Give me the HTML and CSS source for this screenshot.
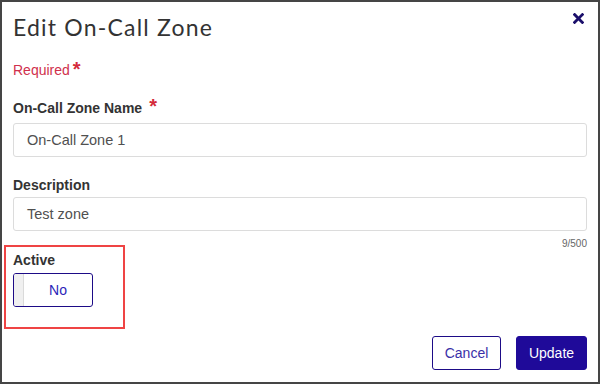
FILE: index.html
```html
<!DOCTYPE html>
<html>
<head>
<meta charset="utf-8">
<link rel="stylesheet" href="styles.css">
</head>
<body>
<div class="dialog">
  <div class="header">
    <h1 class="title">Edit On-Call Zone</h1>
    <button class="close" aria-label="Close">
      <svg width="11" height="11" viewBox="0 0 11 11"><path d="M1.6 1.6 L9.4 9.4 M9.4 1.6 L1.6 9.4" stroke="#1b0f6b" stroke-width="2.8" stroke-linecap="square"/></svg>
    </button>
  </div>
  <div class="required">Required<span class="star star-req">*</span></div>
  <div class="field field-name">
    <label class="label">On-Call Zone Name<span class="star star-label">*</span></label>
    <div class="input">On-Call Zone 1</div>
  </div>
  <div class="field field-desc">
    <label class="label">Description</label>
    <div class="input">Test zone</div>
    <div class="counter">9/500</div>
  </div>
  <div class="active-box">
    <label class="label">Active</label>
    <div class="toggle"><span class="knob"></span><span class="toggle-text">No</span></div>
  </div>
  <div class="footer">
    <button class="btn btn-cancel">Cancel</button>
    <button class="btn btn-update">Update</button>
  </div>
</div>
</body>
</html>
```

FILE: styles.css
```css
html, body {
  margin: 0;
  padding: 0;
  background: #ffffff;
}
.dialog {
  width: 600px;
  height: 384px;
  box-sizing: border-box;
  border: 2px solid #454545;
  padding: 0 11px;
  font-family: "Liberation Sans", Arial, sans-serif;
  color: #333;
  display: flex;
  flex-direction: column;
}
.header {
  display: flex;
  justify-content: space-between;
  align-items: flex-start;
  height: 46px;
  padding-top: 10px;
  box-sizing: border-box;
}
.title {
  margin: 0;
  font-family: Lato, sans-serif;
  font-weight: 400;
  font-size: 23px;
  line-height: 30px;
  letter-spacing: 1.2px;
  color: #333;
}
.close {
  border: 0;
  background: none;
  padding: 0;
  margin: 1px 3px 0 0;
  width: 11px;
  height: 11px;
  display: flex;
}
.required {
  color: #d0304c;
  font-size: 14px;
  line-height: 16px;
  margin-top: 14px;
}
.star {
  color: #d42a3a;
  font-size: 20px;
  font-weight: bold;
  line-height: 0;
  position: relative;
}
.star-req {
  margin-left: 3px;
  top: 1px;
}
.star-label {
  margin-left: 7px;
}
.field {
  display: flex;
  flex-direction: column;
}
.label {
  font-weight: bold;
  font-size: 14px;
  line-height: 16px;
  color: #333;
  display: block;
}
.field-name { margin-top: 22px; }
.field-desc { margin-top: 20px; }
.input {
  height: 34px;
  box-sizing: border-box;
  border: 1px solid #dcdcdc;
  border-radius: 3px;
  padding: 0 13px;
  font-size: 14.5px;
  line-height: 32px;
  color: #505050;
}
.field-name .input { margin-top: 7px; }
.field-desc .input { margin-top: 4px; }
.counter {
  align-self: flex-end;
  font-size: 10px;
  line-height: 10px;
  color: #666;
  margin-top: 8px;
}
.active-box {
  margin-top: -4px;
  margin-left: -9px;
  width: 121px;
  height: 84px;
  box-sizing: border-box;
  border: 2px solid #ef4444;
  padding: 5px 0 0 7px;
}
.toggle {
  margin-top: 5px;
  width: 80px;
  height: 34px;
  box-sizing: border-box;
  border: 1px solid #1d0b87;
  border-radius: 3px;
  display: flex;
  overflow: hidden;
}
.knob {
  width: 9px;
  background: #f0f0f0;
  border-right: 1px solid #dadada;
}
.toggle-text {
  flex: 1;
  text-align: center;
  font-size: 14px;
  line-height: 32px;
  color: #2b1fb8;
}
.footer {
  margin-top: auto;
  margin-bottom: 12px;
  display: flex;
  justify-content: flex-end;
  gap: 15px;
}
.btn {
  height: 34px;
  box-sizing: border-box;
  border-radius: 3px;
  font-family: "Liberation Sans", Arial, sans-serif;
  font-size: 14px;
  padding: 0;
  cursor: pointer;
}
.btn-cancel {
  width: 69px;
  background: #fff;
  border: 1px solid #1d0b87;
  color: #3a2fa8;
}
.btn-update {
  width: 71px;
  background: #1f0a99;
  border: 1px solid #1f0a99;
  color: #fff;
}
```
